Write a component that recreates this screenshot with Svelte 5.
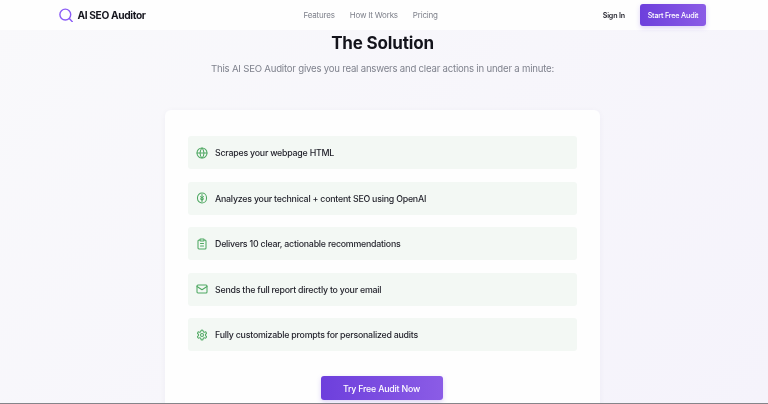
<script>
  const items = [
    { text: 'Scrapes your webpage HTML', icon: 'globe' },
    { text: 'Analyzes your technical + content SEO using OpenAI', icon: 'brain' },
    { text: 'Delivers 10 clear, actionable recommendations', icon: 'clip' },
    { text: 'Sends the full report directly to your email', icon: 'mail' },
    { text: 'Fully customizable prompts for personalized audits', icon: 'gear' }
  ];
</script>

<div class="page">
  <header class="nav">
    <div class="brand">
      <svg class="logo" viewBox="0 0 16 16" fill="none" stroke="#8b5cf6" stroke-width="1.6" stroke-linecap="round">
        <circle cx="7.2" cy="7.2" r="6.2" />
        <path d="M11.8 11.8 L15.2 15.4" />
      </svg>
      <span>AI SEO Auditor</span>
    </div>
    <nav class="links">
      <span>Features</span>
      <span>How It Works</span>
      <span>Pricing</span>
    </nav>
    <div class="actions">
      <span class="signin">Sign In</span>
      <span class="btn small">Start Free Audit</span>
    </div>
  </header>

  <main class="main">
    <h1>The Solution</h1>
    <p class="sub">This AI SEO Auditor gives you real answers and clear actions in under a minute:</p>

    <section class="card">
      <ul class="list">
        {#each items as item}
          <li class="item">
            <svg class="icon" viewBox="0 0 24 24" fill="none" stroke="#4fa862" stroke-width="2.1" stroke-linecap="round" stroke-linejoin="round">
              {#if item.icon === 'globe'}
                <circle cx="12" cy="12" r="10" />
                <path d="M2 12h20" />
                <path d="M12 2a15 15 0 0 1 4 10 15 15 0 0 1-4 10 15 15 0 0 1-4-10 15 15 0 0 1 4-10z" />
              {:else if item.icon === 'brain'}
                <rect x="3" y="2" width="18" height="20" rx="9" />
                <path d="M12 5v14" />
                <path d="M12 12l-3-3M12 12l3-3M12 16l-3-2.5M12 16l3-2.5" />
              {:else if item.icon === 'clip'}
                <rect x="8" y="2" width="8" height="4" rx="1" />
                <path d="M16 4h2a2 2 0 0 1 2 2v14a2 2 0 0 1-2 2H6a2 2 0 0 1-2-2V6a2 2 0 0 1 2-2h2" />
                <path d="M9 11h6M9 16h6" />
              {:else if item.icon === 'mail'}
                <rect x="2" y="4" width="20" height="16" rx="2" />
                <path d="M22 7l-10 6.5L2 7" />
              {:else}
                <circle cx="12" cy="12" r="3" />
                <path d="M12.2 2h-.4a2 2 0 0 0-2 2v.2a2 2 0 0 1-1 1.7l-.4.3a2 2 0 0 1-2 0l-.2-.1a2 2 0 0 0-2.7.7l-.2.4a2 2 0 0 0 .7 2.7l.2.1a2 2 0 0 1 1 1.7v.5a2 2 0 0 1-1 1.8l-.2.1a2 2 0 0 0-.7 2.7l.2.4a2 2 0 0 0 2.7.7l.2-.1a2 2 0 0 1 2 0l.4.3a2 2 0 0 1 1 1.7v.2a2 2 0 0 0 2 2h.4a2 2 0 0 0 2-2v-.2a2 2 0 0 1 1-1.7l.4-.3a2 2 0 0 1 2 0l.2.1a2 2 0 0 0 2.7-.7l.2-.4a2 2 0 0 0-.7-2.7l-.2-.1a2 2 0 0 1-1-1.8v-.5a2 2 0 0 1 1-1.7l.2-.1a2 2 0 0 0 .7-2.7l-.2-.4a2 2 0 0 0-2.7-.7l-.2.1a2 2 0 0 1-2 0l-.4-.3a2 2 0 0 1-1-1.7V4a2 2 0 0 0-2-2z" />
              {/if}
            </svg>
            <span>{item.text}</span>
          </li>
        {/each}
      </ul>
      <div class="cta"><span class="btn large">Try Free Audit Now</span></div>
    </section>
  </main>
</div>

<style>
  :global(body) {
    margin: 0;
    font-family: Inter, "Liberation Sans", sans-serif;
    overflow: hidden;
    background: #f9f9fc;
  }
  .page {
    width: 768px;
    height: 404px;
    overflow: hidden;
    box-sizing: border-box;
    border-bottom: 1px solid #85858a;
    background: linear-gradient(135deg, #f9f9fb, #f5f3fb);
    filter: blur(0.5px);
  }
  .nav {
    height: 30px;
    box-sizing: border-box;
    padding: 0 62px 0 59px;
    display: flex;
    justify-content: space-between;
    align-items: center;
    background: #fefefe;
  }
  .brand {
    display: flex;
    align-items: center;
    gap: 4.5px;
    font-size: 10.2px;
    letter-spacing: -0.36px;
    font-weight: 700;
    color: #17171f;
  }
  .logo { width: 14px; height: 14.5px; }
  .links {
    display: flex;
    gap: 15px;
    font-size: 8px;
    letter-spacing: -0.2px;
    color: #7c7f89;
    margin-right: 7px;
  }
  .actions {
    display: flex;
    align-items: center;
    gap: 15px;
  }
  .signin {
    font-size: 7.1px;
    letter-spacing: -0.15px;
    font-weight: 600;
    color: #2a2a33;
  }
  .btn {
    display: flex;
    align-items: center;
    justify-content: center;
    color: #fff;
    border-radius: 3px;
    background: linear-gradient(90deg, #6d3fdc, #8b5ce6);
    box-shadow: 0 2px 5px rgba(109, 63, 220, 0.22);
    font-weight: 500;
  }
  .btn.small { width: 66px; height: 22px; font-size: 7.2px; letter-spacing: -0.19px; }
  .btn.large { width: 122px; height: 24px; font-size: 8.8px; letter-spacing: -0.2px; }
  .main {
    display: flex;
    flex-direction: column;
    align-items: center;
    padding-right: 3px;
  }
  h1 {
    margin: 3px 0 0;
    font-size: 17px;
    letter-spacing: -0.17px;
    line-height: 21px;
    font-weight: 700;
    color: #13131b;
  }
  .sub {
    margin: 8px 0 0;
    font-size: 9.6px;
    letter-spacing: -0.21px;
    line-height: 14px;
    color: #7f828d;
  }
  .card {
    margin-top: 34px;
    width: 435px;
    box-sizing: border-box;
    padding: 26px 23px 0;
    height: 320px;
    background: #fefefe;
    border-radius: 6px;
    box-shadow: 0 1px 6px rgba(60, 50, 90, 0.04);
  }
  .list {
    list-style: none;
    margin: 0;
    padding: 0;
    display: flex;
    flex-direction: column;
    gap: 12.5px;
  }
  .item {
    height: 33px;
    box-sizing: border-box;
    padding: 0 8px;
    display: flex;
    align-items: center;
    gap: 7px;
    background: #f3f8f4;
    border-radius: 3px;
    font-size: 8.8px;
    letter-spacing: -0.22px;
    font-weight: 500;
    color: #1f1f28;
  }
  .icon { width: 12px; height: 12px; flex: none; }
  .cta {
    margin-top: 25px;
    padding-right: 2px;
    display: flex;
    justify-content: center;
  }
</style>
